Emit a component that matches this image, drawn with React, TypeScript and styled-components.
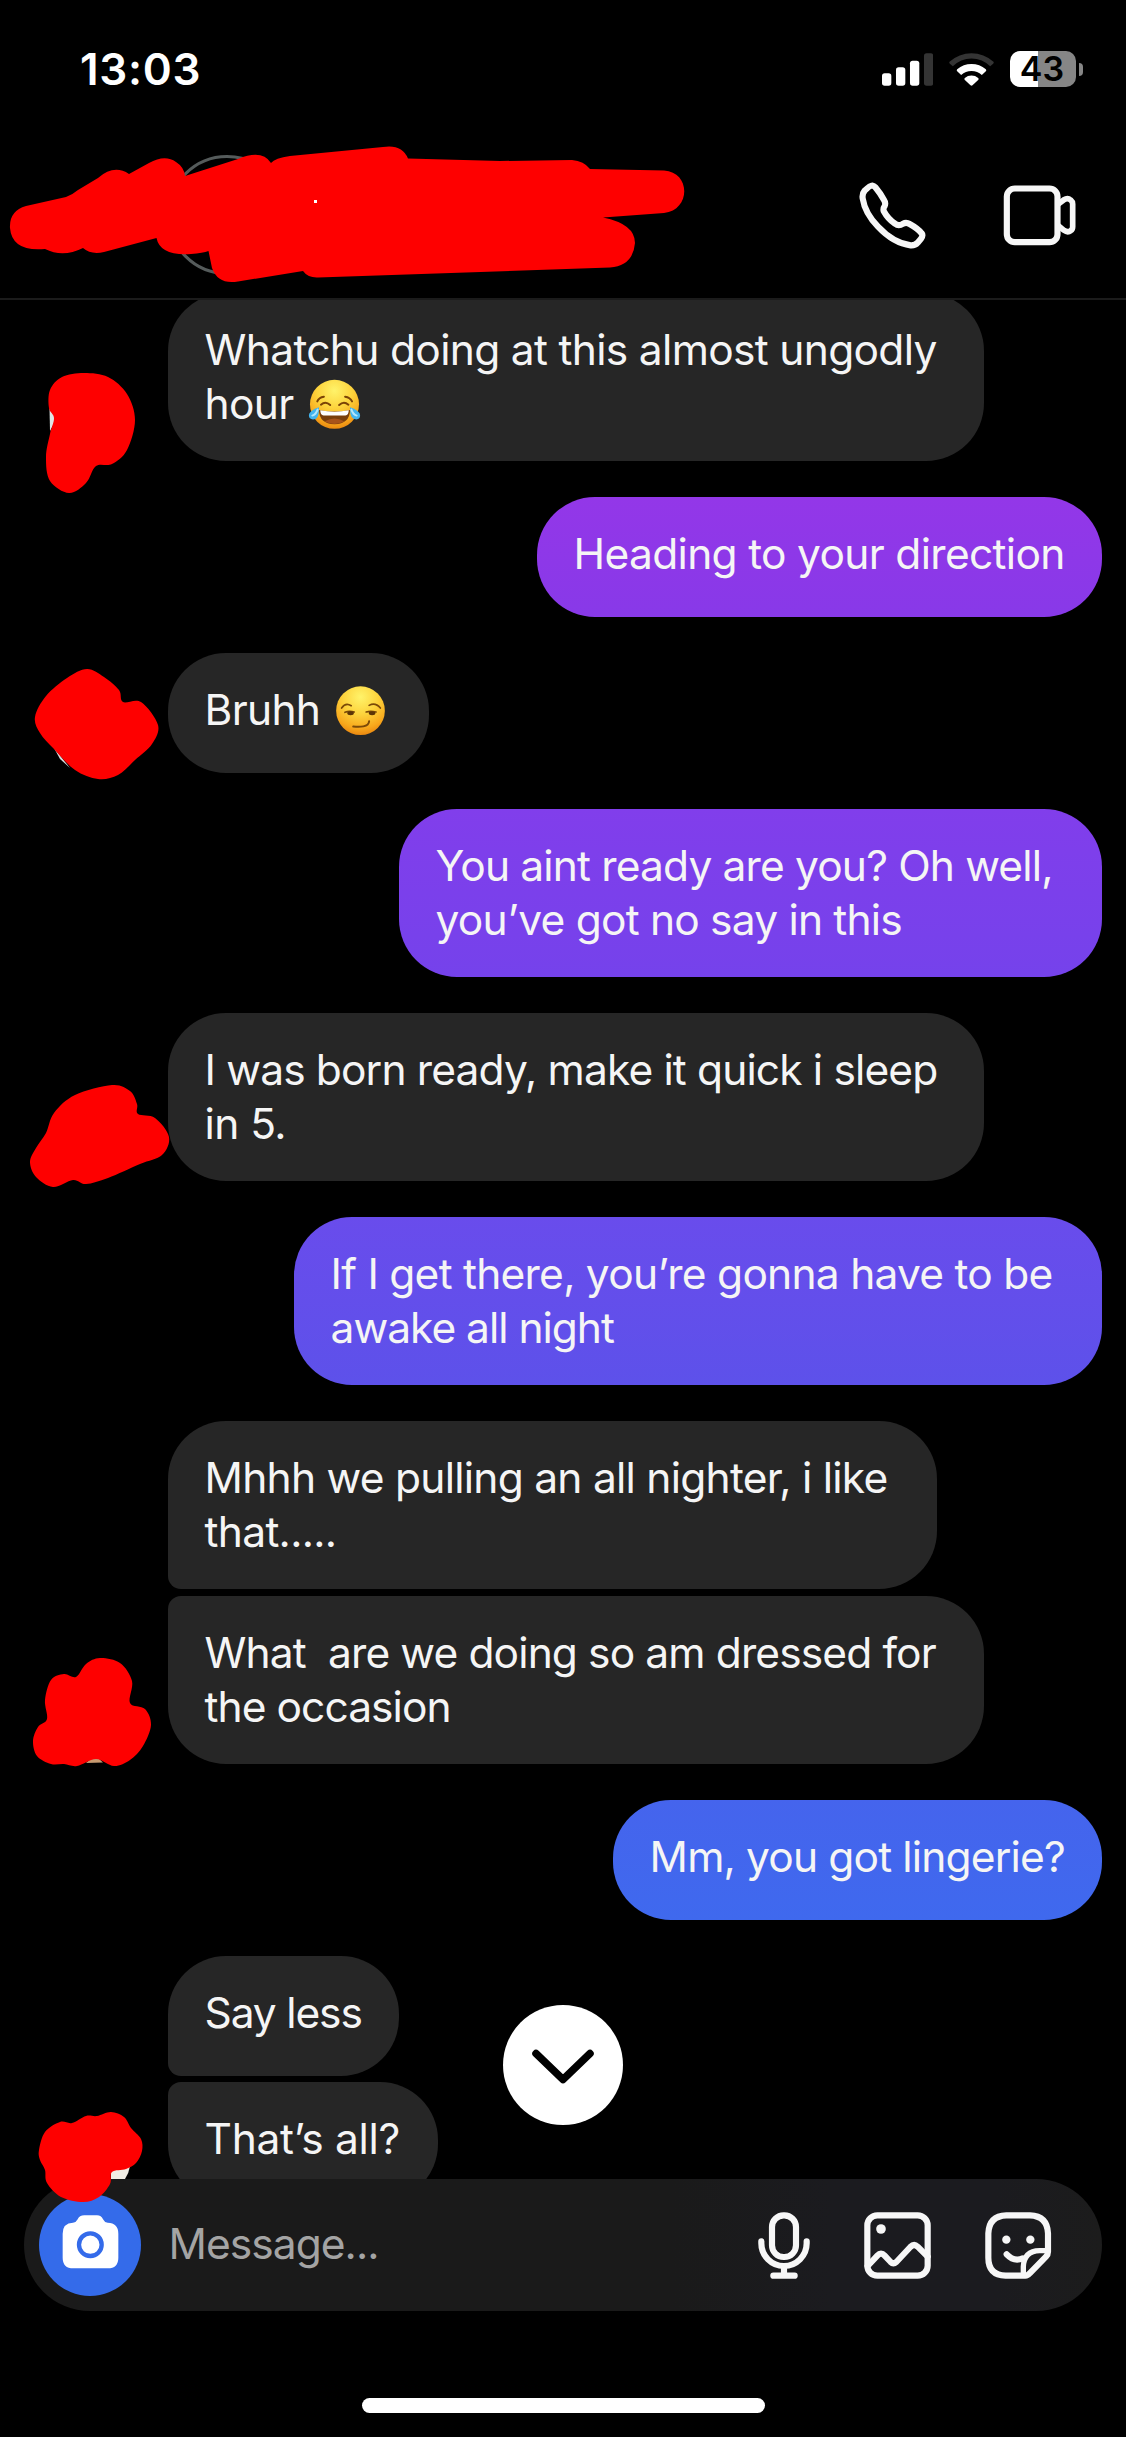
import React from "react";
import styled, { createGlobalStyle } from "styled-components";

const GlobalStyle = createGlobalStyle`
  html, body { margin: 0; padding: 0; background: #000; }
  * { box-sizing: border-box; }
`;

const Screen = styled.div`
  position: relative;
  display: flex;
  flex-direction: column;
  width: 1126px;
  height: 2437px;
  overflow: hidden;
  background: #000;
  color: #f5f5f5;
  font-family: Inter, "Liberation Sans", sans-serif;
`;

const StatusBar = styled.div`
  display: flex;
  align-items: center;
  justify-content: space-between;
  height: 138px;
  padding: 0 43px 0 80px;
`;

const Clock = styled.span`
  font-size: 44px;
  font-weight: 600;
  line-height: 54px;
  letter-spacing: 0.7px;
  color: #fff;
`;

const StatusIcons = styled.div`
  display: flex;
  align-items: center;
  gap: 16px;
`;

const Battery = styled.div`
  display: flex;
  align-items: center;
  gap: 3px;
`;

const BatteryBody = styled.div`
  display: flex;
  align-items: center;
  justify-content: center;
  width: 66px;
  height: 36px;
  padding-right: 2px;
  border-radius: 10px;
  background: linear-gradient(90deg, #fff 0 28.3px, #868686 28.3px);
  color: #000;
  font-size: 34px;
  font-weight: 600;
  line-height: 36px;
  letter-spacing: 0;
`;

const BatteryCap = styled.div`
  width: 4px;
  height: 13px;
  border-radius: 0 6px 6px 0;
  background: #868686;
`;

const ChatHeader = styled.header`
  display: flex;
  align-items: center;
  height: 162px;
  padding: 0 50px 6px 167px;
  border-bottom: 2px solid #1b1b1b;
`;

const AvatarRing = styled.div`
  width: 120px;
  height: 120px;
  border: 3px solid #555b5b;
  border-radius: 50%;
`;

const HeaderActions = styled.div`
  display: flex;
  align-items: center;
  gap: 77px;
  margin-left: auto;
`;

const Thread = styled.main`
  display: flex;
  flex-direction: column;
  height: 1879px;
  padding: 0 24px 0 168px;
  overflow: hidden;
`;

type BubbleProps = {
  $width: number;
  $gap: number;
  $mine?: boolean;
  $fill?: string;
  $joinTop?: boolean;
  $joinBottom?: boolean;
};

const Bubble = styled.div<BubbleProps>`
  flex: none;
  align-self: ${(p) => (p.$mine ? "flex-end" : "flex-start")};
  width: ${(p) => p.$width}px;
  min-height: 120px;
  margin-top: ${(p) => p.$gap}px;
  padding: 30px 0 30px 36.6px;
  border-radius: ${(p) => (p.$joinTop ? 13 : 58)}px 58px 58px ${(p) => (p.$joinBottom ? 13 : 58)}px;
  background: ${(p) => p.$fill ?? "#262626"};
`;

const Line = styled.span<{ $spacing?: number }>`
  display: flex;
  height: 54px;
  font-size: 42.5px;
  line-height: 54px;
  white-space: pre;
  letter-spacing: ${(p) => p.$spacing ?? -0.7}px;
`;

const Emoji = styled.svg`
  flex: none;
  width: 53px;
  height: 51px;
  margin: 2px 0 0 14px;
`;

const Composer = styled.footer`
  display: flex;
  align-items: center;
  flex: none;
  width: 1078px;
  height: 132px;
  margin: 0 24px;
  padding: 0 50px 0 15px;
  border-radius: 66px;
  background: linear-gradient(90deg, #1a1a1a 0 60%, #1b1b1f 75% 90%, #1c1c1c);
`;

const CameraButton = styled.div`
  display: flex;
  align-items: center;
  justify-content: center;
  width: 102px;
  height: 102px;
  padding-bottom: 6px;
  border-radius: 50%;
  background: #346bea;
`;

const Placeholder = styled.span`
  margin: 0 0 2px 27.5px;
  color: #a4a4a4;
  font-size: 42.5px;
  line-height: 54px;
  letter-spacing: -0.95px;
`;

const ComposerActions = styled.div`
  display: flex;
  align-items: center;
  margin-left: auto;
  gap: 54px;
`;

const HomeIndicator = styled.div`
  width: 403px;
  height: 15px;
  margin: 87px 0 0 362px;
  border-radius: 8px;
  background: #fff;
`;

const JumpButton = styled.div`
  position: absolute;
  left: 503px;
  top: 2005px;
  display: flex;
  align-items: center;
  justify-content: center;
  width: 120px;
  height: 120px;
  border-radius: 50%;
  background: #fff;
`;

const Markup = styled.svg`
  position: absolute;
  left: 0;
  top: 0;
  pointer-events: none;
`;

const stroke = {
  fill: "none",
  stroke: "#f7f7f7",
  strokeWidth: 18.5,
  strokeLinecap: "round" as const,
  strokeLinejoin: "round" as const,
};

const SignalIcon = () => (
  <svg width="51.3" height="33" viewBox="128 67 154 99">
    <rect x="128" y="128" width="28" height="37" rx="8" fill="#fff" />
    <rect x="170" y="110" width="28" height="55" rx="8" fill="#fff" />
    <rect x="212" y="90" width="28" height="75" rx="8" fill="#fff" />
    <rect x="254" y="68" width="28" height="97" rx="8" fill="#343434" />
  </svg>
);

const WifiIcon = () => (
  <svg width="45" height="34" viewBox="328.5 65 135 102">
    <path d="M330 94 A99 99 0 0 1 462 94 Q464 97 461 100 L452 108 A78 78 0 0 0 340 108 L331 100 Q328 97 330 94Z" fill="#343434" />
    <path d="M353 117 A66 66 0 0 1 439 117 Q442 120 439 123 L427 134 A46 46 0 0 0 365 134 L353 123 Q350 120 353 117Z" fill="#fff" />
    <path d="M376 143 A31 31 0 0 1 416 143 Q419 146 416 149 L399 165 Q396 167 393 165 L376 149 Q373 146 376 143Z" fill="#fff" />
  </svg>
);

const PhoneIcon = () => (
  <svg width="67" height="67" viewBox="58 457 201 201">
    <path
      {...stroke}
      d="M98 467.500 Q91 467 75 483 Q67 492 69 506 C73 532 89 564 115 591 C145 623 180 643 213 647 Q226 648 234 639 L244 627 Q251 617 246 611 C240 603 226 592 210 583 Q200 577 190 582 Q177 591 166 582 C151 572 139 557 132 544 Q130 536 135 529 Q139 520 133 511 C127 500 117 485 107 473 Q103 468 98 467.500Z"
    />
  </svg>
);

const VideoIcon = () => (
  <svg width="73" height="61" viewBox="490 467 219 183">
    <rect {...stroke} x="501.500" y="477.500" width="152" height="161" rx="24" />
    <path {...stroke} strokeWidth={17} d="M655 525 L673 511 Q684 504 693 512 Q699 517 699 524 V592 Q699 600 693 604 Q684 611 673 603 L655 588" />
  </svg>
);

const CameraIcon = () => (
  <svg width="57" height="54" viewBox="125 344 171 162">
    <path
      d="M158 367 Q168 366 172 357 Q177 345 192 345 H230 Q243 345 248 357 Q252 366 262 367 Q294 368 294 400 V472 Q294 504 262 504 H159 Q127 504 127 472 V400 Q127 368 158 367Z"
      fill="#fff"
    />
    <circle cx="210" cy="433" r="34" fill="none" stroke="#346bea" strokeWidth="13" />
  </svg>
);

const MicIcon = () => (
  <svg width="52" height="67" viewBox="353 214 156 201">
    <rect {...stroke} x="395" y="224" width="72" height="125" rx="35" />
    <path {...stroke} d="M363 302 V308 A68 68 0 0 0 499 308 V302 M431 376 V405 M399 405 H463" />
  </svg>
);

const GalleryIcon = () => (
  <svg width="67" height="67" viewBox="673 214 201 201">
    <rect {...stroke} x="683" y="224" width="181" height="181" rx="30" />
    <circle cx="724" cy="265" r="14.500" fill="#f7f7f7" />
    <path {...stroke} d="M684 376 L713 345 Q724 333 735 345 L753 364 Q761 372 770 364 L812 319 Q823 308 834 318 L864 348" />
  </svg>
);

const StickerIcon = () => (
  <svg width="67" height="67" viewBox="1034 214 201 201">
    <path {...stroke} d="M1155 405 H1096 Q1044 403 1044 351 V278 Q1046 226 1098 224 H1169 Q1221 226 1223 278 V333 Q1223 342 1217 348 L1168 398 Q1162 405 1155 405Z" />
    <path {...stroke} strokeWidth={16} d="M1149 400 V378 Q1151 331 1198 330 H1218" />
    <path {...stroke} d="M1099 341 Q1121 364 1147 353" />
    <circle cx="1098" cy="297" r="12.500" fill="#f7f7f7" />
    <circle cx="1170" cy="297" r="12.500" fill="#f7f7f7" />
  </svg>
);

const ChevronIcon = () => (
  <svg width="66" height="40" viewBox="0 0 66 40">
    <path d="M6 8.500 L33 34.500 L60 8.500" fill="none" stroke="#000" strokeWidth="7.5" strokeLinecap="round" strokeLinejoin="round" />
  </svg>
);

const FaceShade = ({ id }: { id: string }) => (
  <defs>
    <radialGradient id={id} cx="0.5" cy="0.22" r="0.8">
      <stop offset="0" stopColor="#fff36a" />
      <stop offset="0.45" stopColor="#fdd33c" />
      <stop offset="0.8" stopColor="#f8a81c" />
      <stop offset="1" stopColor="#e8840f" />
    </radialGradient>
  </defs>
);

const JoyEmoji = () => (
  <Emoji viewBox="51 39 160 153" role="img" aria-label="face with tears of joy">
    <FaceShade id="joy-face" />
    <circle cx="131" cy="115" r="74" fill="url(#joy-face)" />
    <g fill="none" stroke="#7b4306" strokeWidth="6" strokeLinecap="round">
      <path d="M79 106 Q84 94 99 92" />
      <path d="M163 92 Q178 94 184 106" />
      <path d="M90 116 Q104 104 118 117" />
      <path d="M145 117 Q159 104 173 116" />
    </g>
    <path d="M84 132 Q131 142 178 132 Q177 174 131 175 Q85 174 84 132Z" fill="#7a3f0b" />
    <path d="M88 133 Q131 142 174 133 Q174 147 164 149 H98 Q88 147 88 133Z" fill="#fff" />
    <path d="M101 167 Q131 149 161 167 Q131 181 101 167Z" fill="#a8531a" />
    <path d="M84 124 Q86 160 66 161 Q50 158 55 143 Q62 131 84 124Z" fill="#42b4ee" />
    <path d="M178 124 Q176 160 197 161 Q212 158 207 143 Q200 131 178 124Z" fill="#42b4ee" />
    <path d="M80 131 Q75 146 64 149 M182 131 Q187 146 198 149" stroke="#b2e6fb" strokeWidth="6" fill="none" strokeLinecap="round" />
  </Emoji>
);

const SmirkEmoji = () => (
  <Emoji viewBox="43 29 160 153" role="img" aria-label="smirking face">
    <FaceShade id="smirk-face" />
    <circle cx="123" cy="106" r="73.500" fill="url(#smirk-face)" />
    <g fill="none" stroke="#7b4a08" strokeLinecap="round">
      <path d="M66 98 Q78 80 95 91" strokeWidth="5" />
      <path d="M149 90 Q168 80 183 98" strokeWidth="5" />
      <path d="M76 111 Q88 106 104 110" strokeWidth="5" />
      <path d="M140 110 Q153 106 170 110" strokeWidth="5" />
      <path d="M101 154 C120 156 148 156 149 138" strokeWidth="6" />
    </g>
    <ellipse cx="93" cy="114" rx="10" ry="6" fill="#5c3406" />
    <ellipse cx="158" cy="114" rx="10" ry="6" fill="#5c3406" />
  </Emoji>
);

type Point = [number, number];

// Closed Catmull-Rom spline through the given points.
const blob = (points: Point[], tension = 6) => {
  const n = points.length;
  const at = (i: number) => points[(i + n) % n];
  let d = `M${points[0][0]} ${points[0][1]}`;
  for (let i = 0; i < n; i++) {
    const [a, b, c, e] = [at(i - 1), at(i), at(i + 1), at(i + 2)];
    d += ` C${b[0] + (c[0] - a[0]) / tension} ${b[1] + (c[1] - a[1]) / tension} ${c[0] - (e[0] - b[0]) / tension} ${c[1] - (e[1] - b[1]) / tension} ${c[0]} ${c[1]}`;
  }
  return d + "Z";
};

const HEADER_SCRIBBLE =
  "M26 206 L66 197 Q72 195 78 190 L98 178 Q114 164 129 174 L149 163 Q165 154 176 162 Q184 167 185 176 L238 159 Q262 149 271 163 Q275 158 290 156 L383 147 Q402 144 408 158.500 L500 161 L572 160 Q584 161 590 169 L664 170.500 C691 172 691 210 664 213 L603 217.500 Q635 224 635 243 Q633 266 610 267.500 L318 277.500 Q308 278 303 271 L238 281.500 Q218 285 212 268 L208.500 251 Q203 253 191 254 Q160 256 156.500 238 L104 252 Q91 255 83 248 Q63 258 45 249 Q12 252 10 228 Q9 211 26 206Z";

const AVATAR_MARKS: Point[][] = [
  [[84, 373], [62, 377], [50, 390], [49, 408], [54, 418], [50, 434], [46, 457], [50, 481], [69, 493], [86, 483], [96, 466], [112, 464], [127, 450], [135, 420], [127, 394], [108, 377]],
  [[87, 669], [104, 677], [119, 690], [123, 702], [141, 702], [158, 725], [152, 744], [135, 760], [118, 775], [98, 779], [75, 770], [54, 749], [40, 733], [35, 717], [46, 696], [67, 678]],
  [[112, 1085], [130, 1091], [137, 1104], [138, 1114], [155, 1118], [169, 1137], [162, 1155], [140, 1164], [108, 1178], [86, 1184], [73, 1180], [53, 1187], [36, 1177], [30, 1162], [36, 1148], [46, 1133], [54, 1113], [75, 1095]],
  [[100, 1658], [120, 1663], [132, 1681], [130, 1703], [145, 1709], [151, 1725], [143, 1746], [130, 1760], [114, 1766], [96, 1759], [77, 1766], [64, 1764], [51, 1764], [37, 1756], [33, 1741], [38, 1727], [47, 1719], [45, 1700], [51, 1680], [64, 1674], [76, 1677], [86, 1664]],
  [[39, 2150], [45, 2132], [60, 2122], [72, 2123], [86, 2116], [97, 2116], [111, 2112], [124, 2117], [131, 2128], [141, 2139], [142, 2151], [136, 2163], [126, 2169], [112, 2172], [110, 2184], [99, 2197], [83, 2202], [61, 2197], [47, 2183], [45, 2170], [40, 2160]],
];

const MarkupLayer = () => (
  <Markup width="1126" height="2437" viewBox="0 0 1126 2437">
    <path d="M49.500 408 L57 418 L50 431Z" fill="#dfe5e5" />
    <path d="M54 748 L70 768 L60 759Z" fill="#d8d8d8" />
    <path d="M86 1763 L95 1755 L103 1762.500Z" fill="#c79a70" />
    <path d="M111 2168 L130 2166 Q129 2173 125 2179 H111Z" fill="#f1ede4" />
    <g fill="#fe0000">
      <path d={HEADER_SCRIBBLE} />
      {AVATAR_MARKS.map((points, i) => (
        <path key={i} d={blob(points)} />
      ))}
    </g>
    <rect x="314" y="200" width="3" height="3" fill="#fff" />
  </Markup>
);

export default function App() {
  return (
    <Screen>
      <GlobalStyle />
      <StatusBar>
        <Clock>13:03</Clock>
        <StatusIcons>
          <SignalIcon />
          <WifiIcon />
          <Battery>
            <BatteryBody>43</BatteryBody>
            <BatteryCap />
          </Battery>
        </StatusIcons>
      </StatusBar>

      <ChatHeader>
        <AvatarRing />
        <HeaderActions>
          <PhoneIcon />
          <VideoIcon />
        </HeaderActions>
      </ChatHeader>

      <Thread>
        <Bubble $width={816} $gap={-7}>
          <Line $spacing={-0.68}>Whatchu doing at this almost ungodly</Line>
          <Line $spacing={-0.7}>hour<JoyEmoji /></Line>
        </Bubble>
        <Bubble $mine $width={565} $gap={36} $fill="linear-gradient(#9337e8, #8839e8)">
          <Line $spacing={-0.68}>Heading to your direction</Line>
        </Bubble>
        <Bubble $width={261} $gap={36}>
          <Line $spacing={-0.7}>Bruhh<SmirkEmoji /></Line>
        </Bubble>
        <Bubble $mine $width={703} $gap={36} $fill="linear-gradient(#813eeb, #7542eb)">
          <Line $spacing={-0.85}>You aint ready are you? Oh well,</Line>
          <Line $spacing={-0.8}>you’ve got no say in this</Line>
        </Bubble>
        <Bubble $width={816} $gap={36}>
          <Line $spacing={-0.86}>I was born ready, make it quick i sleep</Line>
          <Line $spacing={-0.6}>in 5.</Line>
        </Bubble>
        <Bubble $mine $width={808} $gap={36} $fill="linear-gradient(#694cec, #5d51ea)">
          <Line $spacing={-0.75}>If I get there, you’re gonna have to be</Line>
          <Line $spacing={-1.02}>awake all night</Line>
        </Bubble>
        <Bubble $width={769} $gap={36} $joinBottom>
          <Line $spacing={-0.75}>Mhhh we pulling an all nighter, i like</Line>
          <Line $spacing={-0.7}>that.....</Line>
        </Bubble>
        <Bubble $width={816} $gap={7} $joinTop>
          <Line $spacing={-0.88}>What  are we doing so am dressed for</Line>
          <Line $spacing={-0.95}>the occasion</Line>
        </Bubble>
        <Bubble $mine $width={489} $gap={36} $fill="linear-gradient(#4564ed, #3f69ee)">
          <Line $spacing={-0.84}>Mm, you got lingerie?</Line>
        </Bubble>
        <Bubble $width={231} $gap={36} $joinBottom>
          <Line $spacing={-1.15}>Say less</Line>
        </Bubble>
        <Bubble $width={270} $gap={6} $joinTop>
          <Line $spacing={-0.3}>That’s all?</Line>
        </Bubble>
      </Thread>

      <Composer>
        <CameraButton>
          <CameraIcon />
        </CameraButton>
        <Placeholder>Message...</Placeholder>
        <ComposerActions>
          <MicIcon />
          <GalleryIcon />
          <StickerIcon />
        </ComposerActions>
      </Composer>
      <HomeIndicator />

      <JumpButton>
        <ChevronIcon />
      </JumpButton>
      <MarkupLayer />
    </Screen>
  );
}
